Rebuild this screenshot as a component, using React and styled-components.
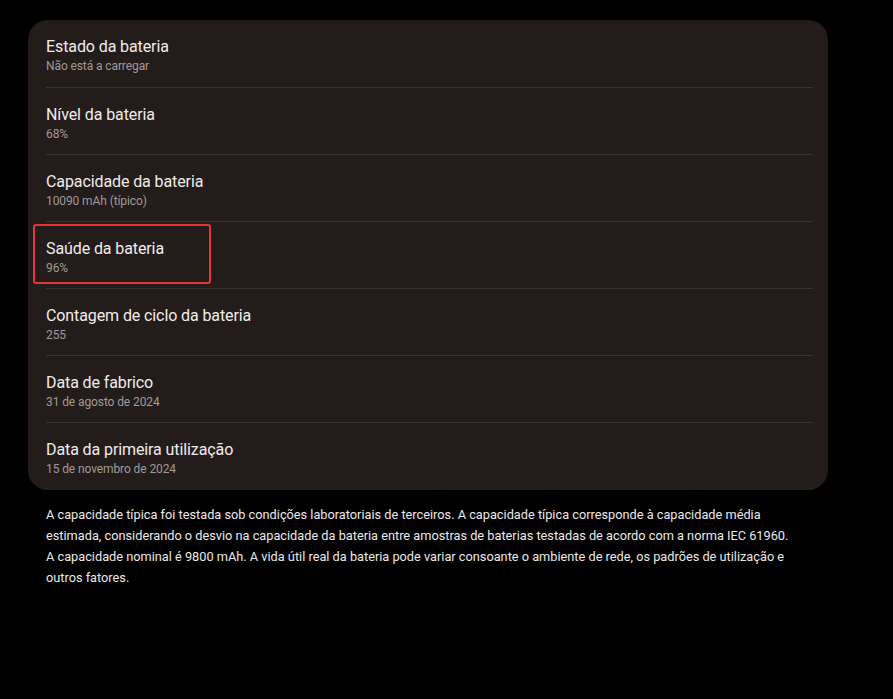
import React from 'react';
import styled, { createGlobalStyle } from 'styled-components';

// Page-wide reset
const GlobalStyle = createGlobalStyle`
  html, body {
    margin: 0;
    padding: 0;
    background: #000;
  }
  body {
    font-family: Roboto, "Noto Sans", sans-serif;
    -webkit-font-smoothing: antialiased;
  }
`;

const Page = styled.div`
  min-height: 699px;
  padding: 20px 0 0 28px;
  box-sizing: border-box;
  background: #000;
`;

// The rounded battery info card
const Card = styled.div`
  width: 800px;
  box-sizing: border-box;
  background: #231c1b;
  border-radius: 20px;
  padding: 0 15px 0 18px;
`;

const Row = styled.div`
  position: relative;
  display: flex;
  flex-direction: column;
  padding: 17px 0 11px;
  border-top: 1px solid #3a3231;

  &:first-child {
    border-top: none;
    padding-bottom: 12px;
  }
  &:last-child {
    padding-bottom: 12px;
  }
`;

const Title = styled.div`
  font-size: 16px;
  line-height: 20px;
  color: #f1ecea;
  letter-spacing: -0.1px;
`;

const Subtitle = styled.div`
  font-size: 12px;
  line-height: 18px;
  color: #a09a98;
  letter-spacing: -0.1px;
`;

// Red annotation box drawn over a row
const Highlight = styled.div`
  position: absolute;
  left: -13px;
  top: 2px;
  width: 178px;
  height: 60px;
  box-sizing: border-box;
  border: 2.5px solid #e5353c;
  border-radius: 3px;
  pointer-events: none;
`;

const Note = styled.p`
  margin: 14px 0 0 18px;
  width: 752px;
  font-size: 12.75px;
  line-height: 21px;
  color: #ece8e7;
`;

const rows = [
  { title: 'Estado da bateria', value: 'Não está a carregar' },
  { title: 'Nível da bateria', value: '68%' },
  { title: 'Capacidade da bateria', value: '10090 mAh (típico)' },
  { title: 'Saúde da bateria', value: '96%', marked: true },
  { title: 'Contagem de ciclo da bateria', value: '255' },
  { title: 'Data de fabrico', value: '31 de agosto de 2024' },
  { title: 'Data da primeira utilização', value: '15 de novembro de 2024' },
];

function App() {
  return (
    <Page>
      <GlobalStyle />
      <Card>
        {rows.map((r) => (
          <Row key={r.title}>
            <Title>{r.title}</Title>
            <Subtitle>{r.value}</Subtitle>
            {r.marked && <Highlight />}
          </Row>
        ))}
      </Card>
      <Note>
        A capacidade típica foi testada sob condições laboratoriais de terceiros. A capacidade típica
        corresponde à capacidade média estimada, considerando o desvio na capacidade da bateria entre
        amostras de baterias testadas de acordo com a norma IEC 61960. A capacidade nominal é 9800 mAh.
        A vida útil real da bateria pode variar consoante o ambiente de rede, os padrões de utilização e
        outros fatores.
      </Note>
    </Page>
  );
}

export default App;
